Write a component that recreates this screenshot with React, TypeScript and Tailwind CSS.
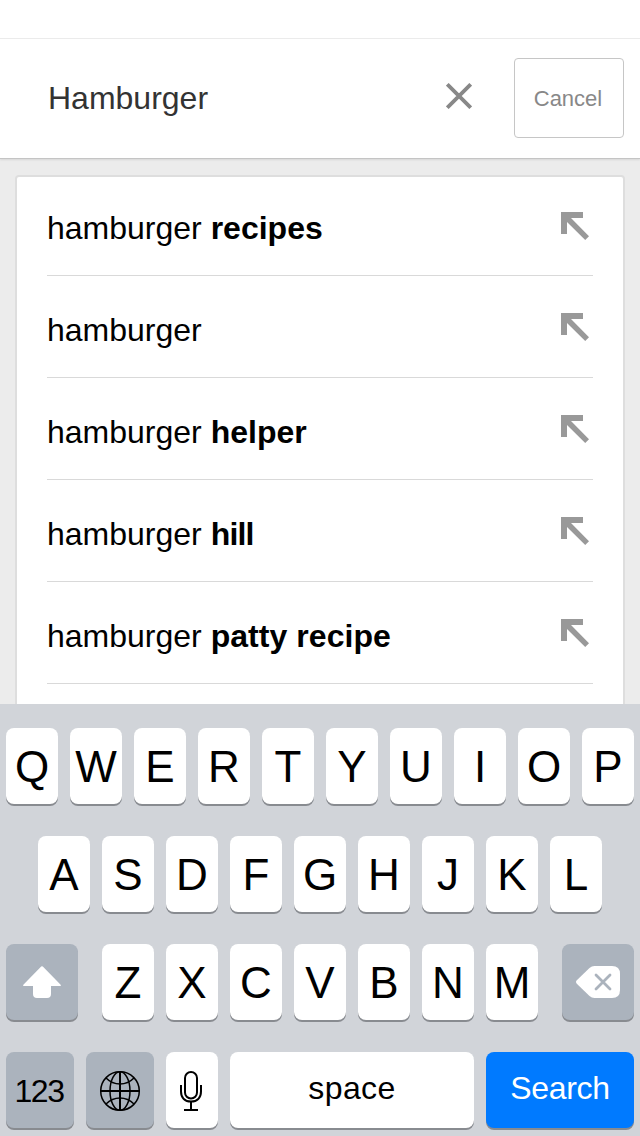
import type { ReactNode } from "react";

const suggestions = [
  { rest: "recipes", tracking: "" },
  { rest: "", tracking: "" },
  { rest: "helper", tracking: "" },
  { rest: "hill", tracking: "tracking-[-0.8px]" },
  { rest: "patty recipe", tracking: "tracking-[0.05px]" },
];

function InsertArrow() {
  return (
    <svg width="28" height="28" viewBox="0 0 28 28" fill="#999" className="block">
      <path d="M0 0H22V6H10L28 24.2L24.2 28L6 10V22H0Z" />
    </svg>
  );
}

function Key({ children, className = "" }: { children: ReactNode; className?: string }) {
  return (
    <button
      className={`flex h-[76px] shrink-0 items-center justify-center rounded-[8px] shadow-[0_2px_0_#888b90] ${className}`}
    >
      {children}
    </button>
  );
}

function Letters({ row }: { row: string }) {
  return (
    <div className="flex gap-3">
      {row.split("").map((letter) => (
        <Key key={letter} className="w-[52px] bg-white text-[44px] leading-[76px]">
          <span className="block pt-0.5">{letter}</span>
        </Key>
      ))}
    </div>
  );
}

export default function App() {
  return (
    <div className="flex h-[1136px] w-[640px] flex-col overflow-hidden bg-[#ececec] font-['Liberation_Sans',Arial,sans-serif] text-black">
      <header className="z-10 h-[158px] shrink-0 bg-white shadow-[0_1px_0_#c4c4c4,0_2px_2px_#00000018]">
        <div className="h-[39px] border-b border-[#ebebeb]" />
        <div className="flex h-[117px] items-center pl-12 pr-4">
          <span className="flex-1 text-[32px] leading-10 text-[#333]">Hamburger</span>
          <svg width="26" height="26" viewBox="0 0 26 26" fill="none" stroke="#888" strokeWidth="3.8" className="mr-[42px] mb-1">
            <path d="M1.3 1.3L24.7 24.7M24.7 1.3L1.3 24.7" />
          </svg>
          <button className="h-20 w-[110px] rounded-[4px] border border-[#c6c6c6] pt-0.5 pr-0.5 text-[22px] text-[#888]">
            Cancel
          </button>
        </div>
      </header>

      <main className="h-[546px] shrink-0 overflow-hidden px-[15px] pt-[17px]">
        <ul className="h-[700px] rounded-[4px] border-2 border-[#dedede] bg-white px-[30px]">
          {suggestions.map(({ rest, tracking }, i) => (
            <li
              key={i}
              className={`flex items-start justify-between border-b border-[#d9d9d9] ${i === 0 ? "h-[99px] pt-[31px]" : "h-[102px] pt-[34px]"}`}
            >
              <span className="text-[32px] leading-10">
                hamburger <b className={tracking}>{rest}</b>
              </span>
              <span className={i === 0 ? "mr-1 pt-1" : "mr-1 pt-[3px]"}>
                <InsertArrow />
              </span>
            </li>
          ))}
        </ul>
      </main>

      <section className="flex h-[432px] shrink-0 flex-col items-center gap-8 bg-[#d1d4d9] pt-6">
        <Letters row="QWERTYUIOP" />
        <Letters row="ASDFGHJKL" />
        <div className="flex gap-6">
          <Key className="w-[72px] bg-[#abb3bd]">
            <svg width="38" height="32" viewBox="0 0 38 32" fill="#fff">
              <path d="M18.2 .6Q19 -.2 19.8 .6L37.4 18.4Q38.6 20 36.8 20H28V28Q28 32 24 32H14Q10 32 10 28V20H1.2Q-.6 20 .6 18.4Z" />
            </svg>
          </Key>
          <Letters row="ZXCVBNM" />
          <Key className="w-[72px] bg-[#abb3bd]">
            <svg width="44" height="32" viewBox="0 0 44 32">
              <path d="M.8 14.3L13.5 2Q15.7 0 18.5 0H36Q44 0 44 8V24Q44 32 36 32H18.5Q15.7 32 13.5 30L.8 17.7Q-.8 16 .8 14.3Z" fill="#fff" />
              <path d="M20 9L34 23M34 9L20 23" stroke="#abb3bd" strokeWidth="2.8" strokeLinecap="round" />
            </svg>
          </Key>
        </div>
        <div className="flex gap-3">
          <Key className="w-[68px] bg-[#abb3bd] text-[32px]">
            <span className="pt-0.5 pr-0.5 tracking-[-1.4px]">123</span>
          </Key>
          <Key className="w-[68px] bg-[#abb3bd]">
            <svg width="42" height="42" viewBox="0 0 42 42" fill="none" stroke="#000" strokeWidth="1.5" className="mt-0.5">
              <circle cx="21" cy="21" r="19.3" />
              <ellipse cx="21" cy="21" rx="10" ry="19.3" />
              <path d="M21 1.5V40.5M1.5 21H40.5" strokeWidth="2" />
              <path d="M7 8Q13 14 21 14T35 8M7 34Q13 28 21 28T35 34" />
            </svg>
          </Key>
          <Key className="w-[52px] bg-white">
            <svg width="24" height="42" viewBox="0 0 24 42" fill="none" stroke="#000" strokeWidth="2" className="-ml-[2px] mt-0.5">
              <rect x="6" y="2" width="12" height="26.5" rx="6" />
              <path d="M2 15V21.5C2 28 6 31.5 12 31.5S22 28 22 21.5V15M12 31.5V40M5 40H19" />
            </svg>
          </Key>
          <Key className="w-[244px] bg-white text-[32px]">
            <span className="pb-1 tracking-[0.4px]">space</span>
          </Key>
          <Key className="w-[148px] bg-[#007aff] text-[32px] text-white">
            <span className="pb-1 tracking-[-0.3px]">Search</span>
          </Key>
        </div>
      </section>
    </div>
  );
}
